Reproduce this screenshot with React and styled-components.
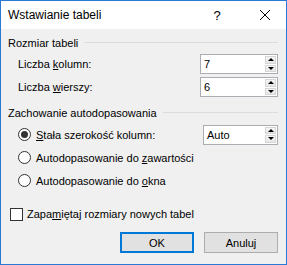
import React from 'react'
import styled, { createGlobalStyle } from 'styled-components'

const Global = createGlobalStyle`
  html, body {
    margin: 0;
    padding: 0;
    background: #ffffff;
  }
  body {
    font-family: "Liberation Sans", Arial, sans-serif;
    font-size: 11px;
    color: #000;
  }
`

const Window = styled.div`
  width: 287px;
  height: 265px;
  box-sizing: border-box;
  border: 1px solid #2a7ad5;
  display: flex;
  flex-direction: column;
  background: #f0f0f0;
`

const TitleBar = styled.div`
  height: 28px;
  background: #ffffff;
  display: flex;
  align-items: center;
  padding-left: 7px;
  font-size: 12px;
`

const Title = styled.div`
  flex: 1;
`

const HelpMark = styled.div`
  width: 12px;
  margin-right: 36px;
  font-size: 13px;
  text-align: center;
`

const CloseBtn = styled.div`
  width: 12px;
  height: 12px;
  margin-right: 15px;
  display: flex;
`

const Body = styled.div`
  flex: 1;
  display: flex;
  flex-direction: column;
  padding: 6px 8px 0 7px;
`

const SectionHead = styled.div`
  height: 15px;
  display: flex;
  align-items: center;
  gap: 6px;
  margin-top: ${p => p.$top || 0}px;

  &::after {
    content: '';
    flex: 1;
    height: 1px;
    background: #dcdcdc;
  }
`

const Group = styled.div`
  display: flex;
  flex-direction: column;
  gap: ${p => p.$gap}px;
  margin-top: 4px;
  padding-left: ${p => p.$indent}px;
`

const Row = styled.div`
  height: ${p => p.$h}px;
  margin-top: ${p => p.$top || 0}px;
  display: flex;
  align-items: center;
`

const Label = styled.span`
  flex: 1;
  u {
    text-decoration: underline;
    text-underline-offset: 1px;
  }
`

const Spin = styled.div`
  width: ${p => p.$w}px;
  height: 20px;
  box-sizing: border-box;
  border: 1px solid #abadb3;
  background: #fff;
  display: flex;
`

const SpinValue = styled.div`
  flex: 1;
  padding-left: 3px;
  display: flex;
  align-items: center;
`

const SpinArrows = styled.div`
  width: 11px;
  margin: 1px;
  display: flex;
  flex-direction: column;
  gap: 1px;
`

const Arrow = styled.div`
  flex: 1;
  border: 1px solid #d6d6d6;
  background: linear-gradient(#f6f6f6, #e6e6e6);
  display: flex;
  align-items: center;
  justify-content: center;

  &::before {
    content: '';
    border-left: 3px solid transparent;
    border-right: 3px solid transparent;
    ${p => (p.$down ? 'border-top: 3px solid #000;' : 'border-bottom: 3px solid #000;')}
  }
`

const Radio = styled.span`
  width: 13px;
  height: 13px;
  box-sizing: border-box;
  border: 1px solid #333;
  border-radius: 50%;
  background: #fff;
  margin-right: 5px;
  display: flex;
  align-items: center;
  justify-content: center;

  &::after {
    content: '';
    width: 7px;
    height: 7px;
    border-radius: 50%;
    background: ${p => (p.$on ? '#333' : 'transparent')};
  }
`

const Check = styled.span`
  width: 13px;
  height: 13px;
  box-sizing: border-box;
  border: 1px solid #333;
  background: #fff;
  margin-left: 2px;
  margin-right: 4px;
`

const Buttons = styled.div`
  display: flex;
  justify-content: flex-end;
  gap: 10px;
  margin-top: 10px;
`

const Button = styled.div`
  width: 74px;
  height: 21px;
  box-sizing: border-box;
  border: ${p => (p.$primary ? '2px solid #0078d7' : '1px solid #adadad')};
  background: #e1e1e1;
  display: flex;
  align-items: center;
  justify-content: center;
`

const SpinBox = ({ value, w }) => (
  <Spin $w={w}>
    <SpinValue>{value}</SpinValue>
    <SpinArrows>
      <Arrow />
      <Arrow $down />
    </SpinArrows>
  </Spin>
)

const App = () => {
  return (
    <>
      <Global />
      <Window>
        <TitleBar>
          <Title>Wstawianie tabeli</Title>
          <HelpMark>?</HelpMark>
          <CloseBtn>
            <svg width="12" height="12" viewBox="0 0 12 12">
              <path d="M1 1 L11 11 M11 1 L1 11" stroke="#000" strokeWidth="1" fill="none" />
            </svg>
          </CloseBtn>
        </TitleBar>
        <Body>
          <SectionHead>Rozmiar tabeli</SectionHead>
          <Group $gap={3} $indent={10}>
            <Row $h={20}>
              <Label>Liczba <u>k</u>olumn:</Label>
              <SpinBox value="7" w={78} />
            </Row>
            <Row $h={20}>
              <Label>Liczba <u>w</u>ierszy:</Label>
              <SpinBox value="6" w={78} />
            </Row>
          </Group>

          <SectionHead $top={8}>Zachowanie autodopasowania</SectionHead>
          <Group $gap={2} $indent={10}>
            <Row $h={21}>
              <Radio $on />
              <Label><u>S</u>tała szerokość kolumn:</Label>
              <SpinBox value="Auto" w={75} />
            </Row>
            <Row $h={21}>
              <Radio />
              <Label>Autodopasowanie do <u>z</u>awartości</Label>
            </Row>
            <Row $h={21}>
              <Radio />
              <Label>Autodopasowanie do <u>o</u>kna</Label>
            </Row>
          </Group>

          <Row $h={16} $top={15}>
            <Check />
            <Label>Zapa<u>m</u>iętaj rozmiary nowych tabel</Label>
          </Row>

          <Buttons>
            <Button $primary>OK</Button>
            <Button>Anuluj</Button>
          </Buttons>
        </Body>
      </Window>
    </>
  )
}

export default App
